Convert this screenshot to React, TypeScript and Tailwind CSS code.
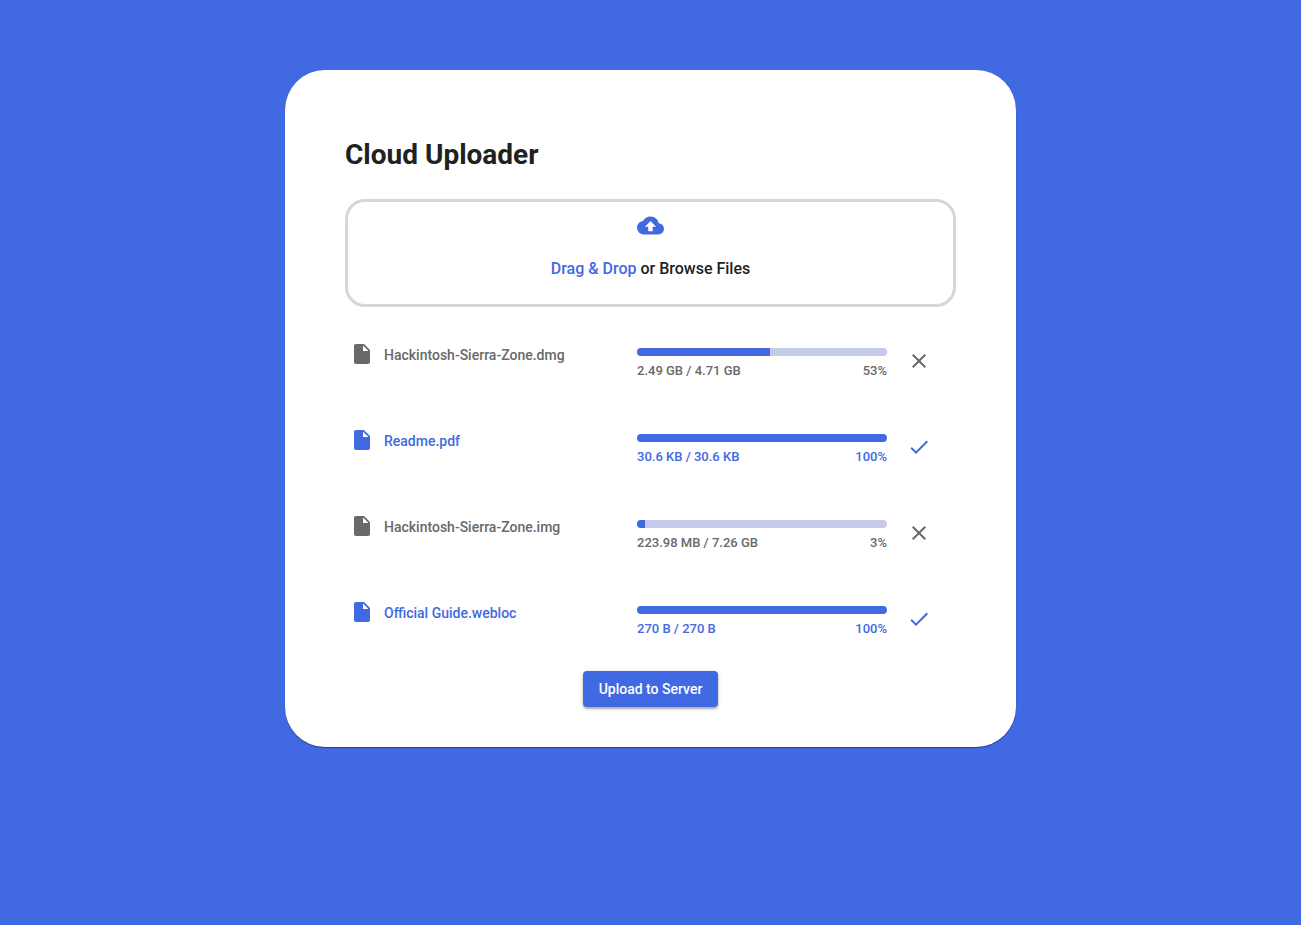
type UploadFile = {
  name: string;
  loaded: string;
  total: string;
  percent: number;
};

const files: UploadFile[] = [
  { name: "Hackintosh-Sierra-Zone.dmg", loaded: "2.49 GB", total: "4.71 GB", percent: 53 },
  { name: "Readme.pdf", loaded: "30.6 KB", total: "30.6 KB", percent: 100 },
  { name: "Hackintosh-Sierra-Zone.img", loaded: "223.98 MB", total: "7.26 GB", percent: 3 },
  { name: "Official Guide.webloc", loaded: "270 B", total: "270 B", percent: 100 },
];

function Icon({ path, className }: { path: string; className: string }) {
  return (
    <svg viewBox="0 0 24 24" fill="currentColor" aria-hidden="true" className={className}>
      <path d={path} />
    </svg>
  );
}

const cloudUpload =
  "M14 13v4h-4v-4H7l5-5 5 5m2.35-2.97C18.67 6.59 15.64 4 12 4 9.11 4 6.6 5.64 5.35 8.03 2.34 8.36 0 10.9 0 14a6 6 0 0 0 6 6h13a5 5 0 0 0 5-5c0-2.64-2.05-4.78-4.65-4.97Z";
const file =
  "M13 9V3.5L18.5 9M6 2c-1.11 0-2 .89-2 2v16a2 2 0 0 0 2 2h12a2 2 0 0 0 2-2V8l-6-6H6Z";
const close =
  "M19 6.41 17.59 5 12 10.59 6.41 5 5 6.41 10.59 12 5 17.59 6.41 19 12 13.41 17.59 19 19 17.59 13.41 12 19 6.41Z";
const check = "M21 7 9 19l-5.5-5.5 1.41-1.41L9 16.17 19.59 5.59 21 7Z";

function FileRow({ item }: { item: UploadFile }) {
  const done = item.percent === 100;
  return (
    <li className={`flex items-start pr-[25px] pl-[5px] ${done ? "text-[#4169e1]" : "text-[#696969]"}`}>
      <Icon path={file} className="size-6 shrink-0" />
      <span className="min-w-0 flex-1 truncate pl-2.5 text-sm leading-[26px] font-medium">
        {item.name}
      </span>
      <div className="w-[250px] shrink-0 pt-1.5">
        <div
          role="progressbar"
          aria-label={item.name}
          aria-valuenow={item.percent}
          aria-valuemin={0}
          aria-valuemax={100}
          className="h-2 overflow-hidden rounded bg-[#c5cae9]"
        >
          <div className="h-full bg-[#4169e1]" style={{ width: `${item.percent}%` }} />
        </div>
        <div className="mt-1 flex justify-between text-[13px] leading-[22px] font-medium">
          <span>
            {item.loaded} / {item.total}
          </span>
          <span>{item.percent}%</span>
        </div>
      </div>
      {done ? (
        <span className="mt-[7px] ml-5 shrink-0">
          <Icon path={check} className="size-6" />
        </span>
      ) : (
        <button
          type="button"
          aria-label={`Cancel ${item.name}`}
          className="mt-[7px] ml-5 shrink-0 cursor-pointer"
        >
          <Icon path={close} className="size-6" />
        </button>
      )}
    </li>
  );
}

export default function App() {
  return (
    <main className="min-h-screen bg-[#4169e1] px-4 py-[70px] font-['Roboto',sans-serif] text-[#212121]">
      <section className="mx-auto max-w-[731px] rounded-[40px] bg-white px-[60px] pt-[65px] pb-10 shadow-[0_1px_1px_rgba(0,0,0,0.4)]">
        <h1 className="text-[28px] leading-10 font-bold">Cloud Uploader</h1>
        <button
          type="button"
          className="mt-6 flex w-full cursor-pointer flex-col items-center rounded-[20px] border-3 border-[#d6d6d6] pt-2.5 pb-[23px]"
        >
          <Icon path={cloudUpload} className="size-[27px] text-[#4169e1]" />
          <span className="mt-[18px] text-base leading-6 font-medium">
            <span className="text-[#4169e1]">Drag &amp; Drop</span> or Browse Files
          </span>
        </button>
        <ul className="mt-[35px] flex flex-col gap-[46px]">
          {files.map((item) => (
            <FileRow key={item.name} item={item} />
          ))}
        </ul>
        <div className="mt-[31px] flex justify-center">
          <button
            type="button"
            className="h-9 cursor-pointer rounded bg-[#4169e1] px-4 text-sm font-medium text-white shadow-[0_2px_2px_rgba(0,0,0,0.24),0_1px_5px_rgba(0,0,0,0.16)]"
          >
            Upload to Server
          </button>
        </div>
      </section>
    </main>
  );
}
